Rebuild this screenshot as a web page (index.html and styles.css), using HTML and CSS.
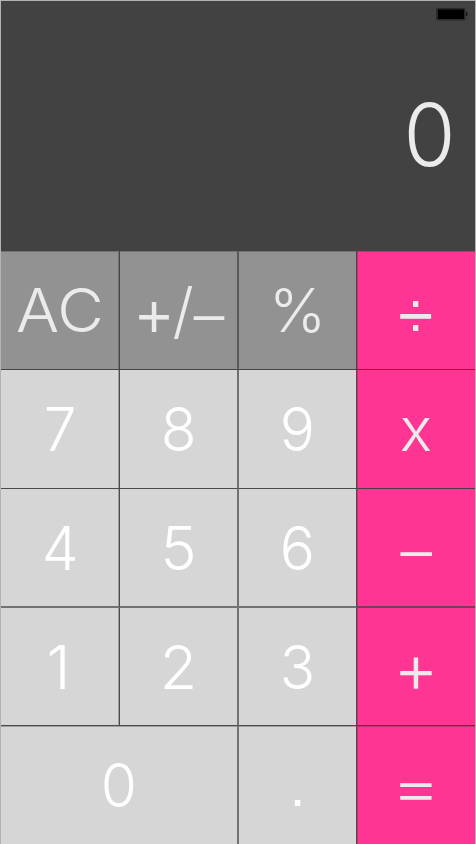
FILE: index.html
```html
<!DOCTYPE html>
<html lang="en">
<head>
<meta charset="utf-8">
<title>Calculator</title>
<link rel="stylesheet" href="styles.css">
</head>
<body>
<main class="calculator">
  <header class="display">
    <svg class="battery" width="32" height="14" viewBox="0 0 32 14" aria-hidden="true">
      <rect x="0" y="1" width="29.5" height="12.5" rx="2" fill="#292929"/>
      <rect x="2" y="2.5" width="26" height="9.500" rx=".5" fill="#000"/>
      <path d="M30 5h1q1 2 0 4h-1z" fill="#111"/>
    </svg>
    <output class="result"><span>0</span></output>
  </header>
  <section class="keypad">
    <button class="key function c1 r1"><span class="clear">AC</span></button>
    <button class="key function c2 r1"><span class="sign"><span class="math">+</span><span class="slash">/</span><span class="dash">–</span></span></button>
    <button class="key function c3 r1"><span class="percent">%</span></button>
    <button class="key operator c4 r1"><span class="math">÷</span></button>
    <button class="key c1 r2"><span class="narrow">7</span></button>
    <button class="key c2 r2"><span class="narrow">8</span></button>
    <button class="key c3 r2"><span class="narrow">9</span></button>
    <button class="key operator c4 r2"><span>x</span></button>
    <button class="key c1 r3"><span class="narrow">4</span></button>
    <button class="key c2 r3"><span>5</span></button>
    <button class="key c3 r3"><span class="narrow">6</span></button>
    <button class="key operator c4 r3"><span class="minus">–</span></button>
    <button class="key c1 r4"><span class="one">1</span></button>
    <button class="key c2 r4"><span>2</span></button>
    <button class="key c3 r4"><span class="narrow">3</span></button>
    <button class="key operator c4 r4"><span class="plus">+</span></button>
    <button class="key wide c2 r5"><span class="narrow">0</span></button>
    <button class="key c3 r5"><span class="point">.</span></button>
    <button class="key operator c4 r5"><span class="equals">=</span></button>
  </section>
</main>
</body>
</html>
```
FILE: styles.css
```css
* { box-sizing: border-box; }
body { margin: 0; background: #b3b3b3; }
.calculator {
  width: 476px;
  height: 844px;
  padding: 1px 1px 0;
  overflow: hidden;
  font-family: Inter, "Liberation Sans", sans-serif;
  font-weight: 300;
}
.display {
  height: 250px;
  background: #424242;
  color: #ebebeb;
  display: flex;
  flex-direction: column;
  align-items: flex-end;
  padding: 6px 7px 0 0;
}
.battery { display: block; }
.result {
  font-size: 86px;
  line-height: 100px;
  margin-top: 64px;
  padding-right: 11.5px;
}
.result span { display: inline-block; transform: scaleX(.98); }
.keypad {
  display: grid;
  grid-template-columns: 119px 119px 118px 118px;
  grid-template-rows: 119px 119px 119px 118px 118px;
}
.key {
  --line: rgba(60, 60, 60, .9);
  --soft: rgba(60, 60, 60, .35);
  --mid: rgba(60, 60, 60, .65);
  appearance: none;
  border: 0 solid var(--line);
  border-radius: 0;
  margin: 0;
  padding: 0;
  background: #d6d6d6;
  color: #fff;
  font: inherit;
  font-size: 61px;
  line-height: 72px;
  display: flex;
  align-items: center;
  justify-content: center;
}
.key span { display: inline-block; }
.wide { grid-column: span 2; }
.function { background: #929292; color: #ebebeb; }
.operator { background: #ff3593; color: #ebebeb; }
.c1 { border-right-width: 1px; box-shadow: inset -1px 0 var(--soft); }
.c2 { border-right: 2px solid var(--mid); }
.c3 { border-right-width: 1px; }
.c4 { box-shadow: inset 1px 0 var(--soft); }
.r1, .r2, .r4 { border-bottom-width: 1px; }
.r3 { border-bottom: 2px solid var(--mid); }
.r1, .r5 { box-shadow: inset 0 1px var(--soft); }
.r1.c1 { box-shadow: inset -1px 1px var(--soft); }
.r1.c4, .r5.c4 { box-shadow: inset 1px 1px var(--soft); }
.math { font-family: "Liberation Sans", sans-serif; transform: translateY(5.5px) scale(1.04, 1.1); transform-origin: 50% 57%; }
.point { font-family: "Liberation Sans", sans-serif; font-size: 56px; transform: translateY(2px); }
.clear { transform: scaleX(1.05); }
.narrow { transform: scaleX(.96); }
.one { transform: translateX(-1.5px); }
.minus { transform: translateY(3px) scaleX(1.03); }
.plus { transform: translateY(1.5px) scale(1.14); transform-origin: 50% 57%; }
.equals { transform: translateY(1.5px) scaleX(1.26); }
.key .sign { display: flex; }
.sign .math { transform: translate(1.5px, 5.5px); }
.slash { transform: translateX(2px); }
.dash { transform: translate(2px, 4.5px); }
```
